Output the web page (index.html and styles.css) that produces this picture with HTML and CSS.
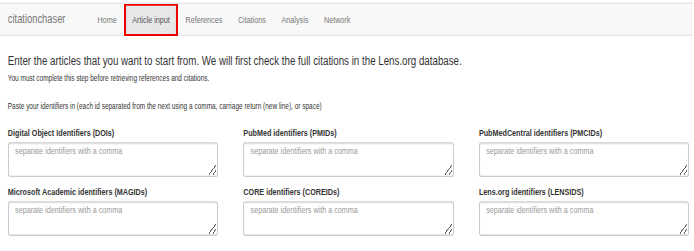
FILE: index.html
```html
<!DOCTYPE html>
<html lang="en">
<head>
  <meta charset="UTF-8">
  <title>citationchaser</title>
  <link rel="stylesheet" href="styles.css">
</head>
<body>
  <div class="page">
    <nav class="navbar">
      <span class="brand">citationchaser</span>
      <ul class="nav">
        <li><a href="#">Home</a></li>
        <li class="active marked"><a href="#">Article input</a></li>
        <li><a href="#">References</a></li>
        <li><a href="#">Citations</a></li>
        <li><a href="#">Analysis</a></li>
        <li><a href="#">Network</a></li>
      </ul>
    </nav>

    <main class="content">
      <h4>Enter the articles that you want to start from. We will first check the full citations in the Lens.org database.</h4>
      <p class="note">You must complete this step before retrieving references and citations.</p>
      <p class="note note-gap">Paste your identifiers in (each id separated from the next using a comma, carriage return (new line), or space)</p>

      <div class="fields">
        <div class="field">
          <label for="dois">Digital Object Identifiers (DOIs)</label>
          <textarea id="dois" placeholder="separate identifiers with a comma"></textarea>
        </div>
        <div class="field">
          <label for="pmids">PubMed identifiers (PMIDs)</label>
          <textarea id="pmids" placeholder="separate identifiers with a comma"></textarea>
        </div>
        <div class="field">
          <label for="pmcids">PubMedCentral identifiers (PMCIDs)</label>
          <textarea id="pmcids" placeholder="separate identifiers with a comma"></textarea>
        </div>
        <div class="field">
          <label for="magids">Microsoft Academic identifiers (MAGIDs)</label>
          <textarea id="magids" placeholder="separate identifiers with a comma"></textarea>
        </div>
        <div class="field">
          <label for="coreids">CORE identifiers (COREIDs)</label>
          <textarea id="coreids" placeholder="separate identifiers with a comma"></textarea>
        </div>
        <div class="field">
          <label for="lensids">Lens.org identifiers (LENSIDS)</label>
          <textarea id="lensids" placeholder="separate identifiers with a comma"></textarea>
        </div>
      </div>
    </main>
  </div>
</body>
</html>
```

FILE: styles.css
```css
* {
  box-sizing: border-box;
}

html {
  height: 100%;
  overflow: hidden;
}

body {
  min-height: 100%;
  margin: 0;
  font-family: "Liberation Sans", Arial, sans-serif;
  color: #333;
  background: #fff;
}

/* the capture is squeezed sideways: shrink the page, then stretch it back up */
.page {
  width: 889px;
  padding-top: 3px;
  zoom: 0.78;
  transform: scaleY(1.2821);
  transform-origin: 0 0;
}

.navbar {
  display: flex;
  height: 33px;
  background: #f8f8f8;
  border-top: 1px solid #e7e7e7;
  border-bottom: 1px solid #e7e7e7;
}

.brand {
  padding: 0 10px;
  font-size: 12px;
  line-height: 31px;
  color: #777;
}

.nav {
  display: flex;
  list-style: none;
  margin: 0 0 0 21px;
  padding: 0;
}

.nav a {
  display: block;
  height: 31px;
  padding: 2px 10px 0;
  font-size: 9.25px;
  line-height: 29px;
  color: #777;
  text-decoration: none;
}

.nav .active a {
  background: #e7e7e7;
  color: #555;
}

/* red annotation box, sides thicker to make up for the squeeze */
.nav .marked a {
  box-shadow:
    inset 2.6px 0 0 #e00,
    inset -2.6px 0 0 #e00,
    inset 0 2px 0 #e00,
    inset 0 -2px 0 #e00;
}

.content {
  padding: 0 10px;
}

h4 {
  margin: 19px 0 0;
  font-size: 12.5px;
  line-height: 14px;
  font-weight: normal;
}

.note {
  margin: 3.5px 0 0;
  font-size: 8.3px;
  line-height: 10px;
}

.note-gap {
  margin-top: 18.5px;
}

.fields {
  display: grid;
  grid-template-columns: repeat(3, 270px);
  column-gap: 32px;
  row-gap: 10px;
  margin-top: 17.4px;
}

.field label {
  display: block;
  margin-bottom: 2.8px;
  font-size: 9.25px;
  line-height: 11px;
  font-weight: bold;
}

.field textarea {
  display: block;
  width: 100%;
  height: 35px;
  padding: 3px 8px;
  font-family: inherit;
  font-size: 9.25px;
  line-height: 11px;
  color: #555;
  background: #fff;
  border: 1px solid #ccc;
  border-radius: 3px;
  box-shadow: inset 0 1px 1px rgba(0, 0, 0, 0.075);
}

.field textarea::placeholder {
  color: #999;
}
```
